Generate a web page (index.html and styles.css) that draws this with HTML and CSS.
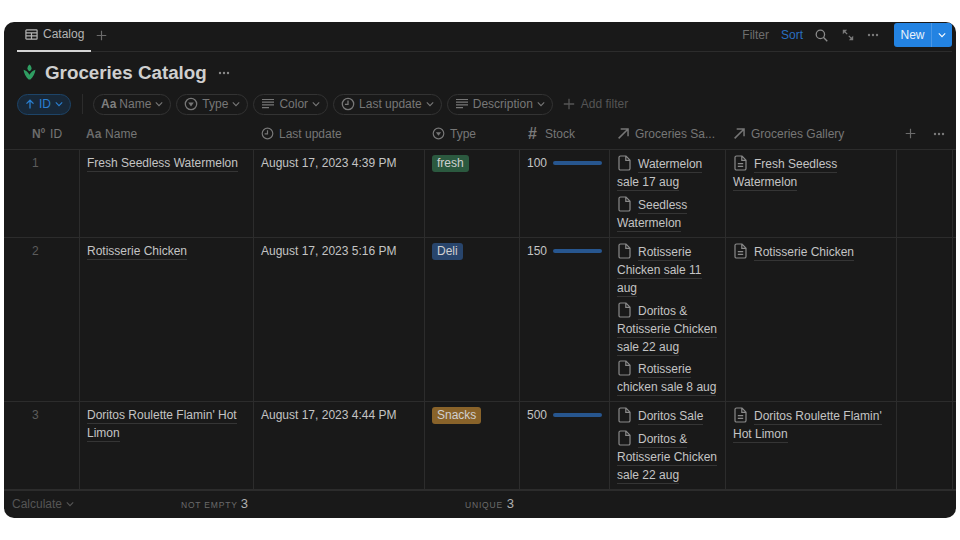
FILE: index.html
```html
<!DOCTYPE html>
<html lang="en">
<head>
    <meta charset="UTF-8">
    <title>Groceries Catalog</title>
    <link rel="stylesheet" href="styles.css">
</head>
<body>
    <svg class="defs" width="0" height="0">
        <symbol id="i-clock" viewBox="0 0 14 14"><circle cx="7" cy="7" r="5.7" fill="none" stroke="currentColor" stroke-width="1.3"/><path d="M7 3.5V7.4H3.9" fill="none" stroke="currentColor" stroke-width="1.3"/></symbol>
        <symbol id="i-select" viewBox="0 0 14 14"><circle cx="7" cy="7" r="5.7" fill="none" stroke="currentColor" stroke-width="1.3"/><path d="M4.2 5.6h5.6L7 9.4z" fill="currentColor"/></symbol>
        <symbol id="i-text" viewBox="0 0 14 14"><path d="M1 2.5h12M1 5.2h12M1 7.9h12M1 10.6h7" fill="none" stroke="currentColor" stroke-width="1.2"/></symbol>
        <symbol id="i-chev" viewBox="0 0 8 8"><path d="M.8 2.4 4 5.6l3.2-3.2" fill="none" stroke="currentColor" stroke-width="1.1"/></symbol>
        <symbol id="i-arrow" viewBox="0 0 12 12"><path d="M1.5 10.500 10 2M3.400 1.800H10.200V8.600" fill="none" stroke="currentColor" stroke-width="1.400"/></symbol>
        <symbol id="i-dots" viewBox="0 0 12 4"><circle cx="2" cy="2" r="1.2" fill="currentColor"/><circle cx="6" cy="2" r="1.2" fill="currentColor"/><circle cx="10" cy="2" r="1.2" fill="currentColor"/></symbol>
        <symbol id="i-plus" viewBox="0 0 12 12"><path d="M6 .8v10.400M.8 6h10.400" fill="none" stroke="currentColor" stroke-width="1.300"/></symbol>
        <symbol id="i-page" viewBox="0 0 13 16"><path d="M1 2.600C1 1.600 1.600 1 2.600 1H8l4 4.200v8.200c0 1-.6 1.600-1.600 1.600H2.600c-1 0-1.600-.6-1.600-1.600zM7.800 1.200v4.200H12" fill="none" stroke="currentColor" stroke-width="1.200"/></symbol>
        <symbol id="i-doc" viewBox="0 0 13 16"><path d="M1 2.600C1 1.600 1.600 1 2.600 1H8l4 4.200v8.200c0 1-.6 1.600-1.600 1.600H2.600c-1 0-1.600-.6-1.600-1.600zM7.800 1.200v4.200H12M3.800 8.600h5.400M3.800 11.400h5.400" fill="none" stroke="currentColor" stroke-width="1.200"/></symbol>
    </svg>

    <div class="app">
        <div class="tabs">
            <div class="tab">
                <svg class="tab-icon" viewBox="0 0 14 12"><path d="M1.600 1h10.800c.4 0 .7.3.7.7v8.600c0 .4-.3.7-.7.7H1.600a.7.7 0 0 1-.7-.7V1.700c0-.4.3-.7.7-.7zM1 4.200h12M1 7.500h12M7 4.200V11" fill="none" stroke="currentColor" stroke-width="1.300"/></svg>
                <span>Catalog</span>
            </div>
            <svg class="tab-plus"><use href="#i-plus"/></svg>
            <div class="tools">
                <span class="tool">Filter</span>
                <span class="tool tool-blue">Sort</span>
                <svg class="tool-search" viewBox="0 0 14 14"><circle cx="5.800" cy="5.800" r="4.500" fill="none" stroke="currentColor" stroke-width="1.400"/><path d="m9 9 4.200 4.200" fill="none" stroke="currentColor" stroke-width="1.500"/></svg>
                <svg class="tool-expand" viewBox="0 0 12 12"><path d="M.8.8h4.400L.8 5.200zM11.200 11.200H6.800l4.400-4.400z" fill="currentColor"/><path d="m2.500 2.500 2.700 2.700M6.800 6.800l2.700 2.700" stroke="currentColor" stroke-width="1.200"/></svg>
                <svg class="tool-dots"><use href="#i-dots"/></svg>
                <div class="new-btn">
                    <span class="new-label">New</span>
                    <span class="new-arrow"><svg class="chev"><use href="#i-chev"/></svg></span>
                </div>
            </div>
        </div>

        <div class="title-row">
            <svg class="logo" viewBox="0 0 14 18"><path d="M7 .8c1.300 1.200 2.200 2.600 2.200 4.100 0 1.500-.9 2.700-2.200 3.300-1.300-.6-2.200-1.800-2.200-3.300C4.800 3.400 5.700 2 7 .8z" fill="#2f9e62"/><path d="M.6 6.500c2.600.6 5 2.600 6.400 5.400 1.400-2.800 3.800-4.800 6.400-5.400-.2 3.400-2.600 8-5.400 10.700H6C3.200 14.500.8 9.900.6 6.500z" fill="#2f9e62"/></svg>
            <h1>Groceries Catalog</h1>
            <svg class="title-dots"><use href="#i-dots"/></svg>
        </div>

        <div class="filters">
            <div class="pill pill-blue">
                <svg class="sort-arrow" viewBox="0 0 10 10"><path d="M5 9.500V1.200M1.500 4.600 5 1.200l3.500 3.400" fill="none" stroke="currentColor" stroke-width="1.300"/></svg>
                <span>ID</span>
                <svg class="chev"><use href="#i-chev"/></svg>
            </div>
            <div class="divider"></div>
            <div class="pill"><b class="aa">Aa</b><span>Name</span><svg class="chev"><use href="#i-chev"/></svg></div>
            <div class="pill"><svg class="pill-icon"><use href="#i-select"/></svg><span>Type</span><svg class="chev"><use href="#i-chev"/></svg></div>
            <div class="pill"><svg class="pill-icon"><use href="#i-text"/></svg><span>Color</span><svg class="chev"><use href="#i-chev"/></svg></div>
            <div class="pill"><svg class="pill-icon"><use href="#i-clock"/></svg><span>Last update</span><svg class="chev"><use href="#i-chev"/></svg></div>
            <div class="pill"><svg class="pill-icon"><use href="#i-text"/></svg><span>Description</span><svg class="chev"><use href="#i-chev"/></svg></div>
            <div class="add-filter"><svg class="add-plus"><use href="#i-plus"/></svg><span>Add filter</span></div>
        </div>

        <div class="row row-head">
            <div class="th th-id"><span class="no">Nº</span><span>ID</span></div>
            <div class="th"><span class="aa-head">Aa</span><span>Name</span></div>
            <div class="th"><svg class="th-icon"><use href="#i-clock"/></svg><span>Last update</span></div>
            <div class="th"><svg class="th-icon"><use href="#i-select"/></svg><span>Type</span></div>
            <div class="th"><span class="hash">#</span><span>Stock</span></div>
            <div class="th"><svg class="th-icon"><use href="#i-arrow"/></svg><span>Groceries Sa...</span></div>
            <div class="th"><svg class="th-icon"><use href="#i-arrow"/></svg><span>Groceries Gallery</span></div>
            <div class="th th-end"><svg class="head-plus"><use href="#i-plus"/></svg><svg class="head-dots"><use href="#i-dots"/></svg></div>
        </div>

        <div class="row row-1">
            <div class="td td-id">1</div>
            <div class="td"><span class="link">Fresh Seedless Watermelon</span></div>
            <div class="td">August 17, 2023 4:39 PM</div>
            <div class="td"><span class="tag tag-green">fresh</span></div>
            <div class="td td-stock"><span>100</span><span class="bar"></span></div>
            <div class="td td-rel">
                <div class="rel"><svg class="page"><use href="#i-page"/></svg><span class="link">Watermelon sale 17 aug</span></div>
                <div class="rel"><svg class="page"><use href="#i-page"/></svg><span class="link">Seedless Watermelon</span></div>
            </div>
            <div class="td td-rel">
                <div class="rel"><svg class="page"><use href="#i-doc"/></svg><span class="link">Fresh Seedless Watermelon</span></div>
            </div>
            <div class="td"></div>
        </div>

        <div class="row row-2">
            <div class="td td-id">2</div>
            <div class="td"><span class="link">Rotisserie Chicken</span></div>
            <div class="td">August 17, 2023 5:16 PM</div>
            <div class="td"><span class="tag tag-blue">Deli</span></div>
            <div class="td td-stock"><span>150</span><span class="bar"></span></div>
            <div class="td td-rel">
                <div class="rel"><svg class="page"><use href="#i-page"/></svg><span class="link">Rotisserie Chicken sale 11 aug</span></div>
                <div class="rel"><svg class="page"><use href="#i-page"/></svg><span class="link">Doritos &amp; Rotisserie Chicken sale 22 aug</span></div>
                <div class="rel"><svg class="page"><use href="#i-page"/></svg><span class="link">Rotisserie chicken sale 8 aug</span></div>
            </div>
            <div class="td td-rel">
                <div class="rel"><svg class="page"><use href="#i-doc"/></svg><span class="link">Rotisserie Chicken</span></div>
            </div>
            <div class="td"></div>
        </div>

        <div class="row row-3">
            <div class="td td-id">3</div>
            <div class="td"><span class="link">Doritos Roulette Flamin' Hot Limon</span></div>
            <div class="td">August 17, 2023 4:44 PM</div>
            <div class="td"><span class="tag tag-brown">Snacks</span></div>
            <div class="td td-stock"><span>500</span><span class="bar"></span></div>
            <div class="td td-rel">
                <div class="rel"><svg class="page"><use href="#i-page"/></svg><span class="link">Doritos Sale</span></div>
                <div class="rel"><svg class="page"><use href="#i-page"/></svg><span class="link">Doritos &amp; Rotisserie Chicken sale 22 aug</span></div>
            </div>
            <div class="td td-rel">
                <div class="rel"><svg class="page"><use href="#i-doc"/></svg><span class="link">Doritos Roulette Flamin' Hot Limon</span></div>
            </div>
            <div class="td"></div>
        </div>

        <div class="footer">
            <div class="calc"><span>Calculate</span><svg class="chev"><use href="#i-chev"/></svg></div>
            <div class="stat stat-name"><span class="stat-label">NOT EMPTY</span><span class="stat-val">3</span></div>
            <div class="stat stat-type"><span class="stat-label">UNIQUE</span><span class="stat-val">3</span></div>
        </div>
    </div>
</body>
</html>
```

FILE: styles.css
```css
* {
    box-sizing: border-box;
}
body {
    margin: 0;
    width: 960px;
    height: 540px;
    background-color: #ffffff;
    padding: 22px 4px;
    font-family: "Liberation Sans", Arial, sans-serif;
    font-size: 12px;
    color: #c4c4c4;
    overflow: hidden;
}
.defs {
    display: block;
    height: 0;
}
.app {
    width: 952px;
    height: 496px;
    background-color: #191919;
    border-radius: 10px;
    overflow: hidden;
}
svg {
    flex: none;
}

/* tabs */
.tabs {
    display: flex;
    align-items: center;
    height: 30px;
    margin: 0 4px 0 13px;
    border-bottom: 1px solid #2c2c2c;
}
.tab {
    display: flex;
    align-items: center;
    gap: 5px;
    width: 74px;
    height: 30px;
    padding: 0 0 3px 8px;
    border-bottom: 2px solid #d4d4d4;
    color: #b4b4b4;
}
.tab-icon {
    width: 13px;
    height: 11px;
}
.tab-plus {
    width: 11px;
    height: 11px;
    margin: 0 0 3px 5px;
    color: #6b6b6b;
}
.tools {
    display: flex;
    align-items: center;
    margin-left: auto;
    height: 30px;
    padding-bottom: 3px;
    color: #6e6e6e;
}
.tool-blue {
    margin-left: 12px;
    color: #2a6fc0;
}
.tool-search {
    width: 13px;
    height: 13px;
    margin-left: 12px;
    color: #8a8a8a;
}
.tool-expand {
    width: 12px;
    height: 12px;
    margin-left: 14px;
    color: #7a7a7a;
}
.tool-dots {
    width: 12px;
    height: 4px;
    margin-left: 13px;
    color: #7a7a7a;
}
.new-btn {
    display: flex;
    align-items: stretch;
    height: 24px;
    margin: 0 0 1px 15px;
    background-color: #2383e2;
    border-radius: 3px;
    color: #ffffff;
}
.new-label {
    width: 37px;
    padding-top: 5px;
    text-align: center;
    color: #e8f2fc;
}
.new-arrow {
    display: flex;
    align-items: center;
    justify-content: center;
    width: 21px;
    border-left: 1px solid #4a97e6;
}

/* title */
.title-row {
    display: flex;
    align-items: center;
    height: 40px;
    padding: 2px 0 0 19px;
}
.logo {
    width: 13px;
    height: 18px;
    margin-top: -3px;
}
h1 {
    margin: 0 0 0 9px;
    font-size: 18.8px;
    font-weight: 700;
    color: #cfcfcf;
}
.title-dots {
    width: 12px;
    height: 4px;
    margin-left: 11px;
    color: #8a8a8a;
}

/* filters */
.filters {
    display: flex;
    align-items: center;
    height: 24px;
    padding-left: 13px;
    gap: 5px;
    color: #777777;
}
.pill {
    display: flex;
    align-items: center;
    gap: 4px;
    height: 21px;
    padding: 0 7px;
    border: 1px solid #333333;
    border-radius: 11px;
}
.pill-blue {
    background-color: #182838;
    border-color: #1d4468;
    color: #2a7fd0;
}
.sort-arrow {
    width: 10px;
    height: 10px;
}
.divider {
    width: 1px;
    height: 20px;
    margin: 0 5px 0 6px;
    background-color: #2c2c2c;
}
.aa {
    margin-right: -1px;
    font-size: 12px;
    color: #7f7f7f;
}
.pill-icon {
    width: 14px;
    height: 14px;
}
.chev {
    width: 8px;
    height: 8px;
}
.add-filter {
    display: flex;
    align-items: center;
    gap: 6px;
    margin: 0 0 1px 5px;
    color: #555555;
}
.add-plus {
    width: 12px;
    height: 12px;
}

/* table */
.row {
    display: grid;
    grid-template-columns: 76px 174px 171px 95px 90px 116px 171px 56px;
    border-bottom: 1px solid #2c2c2c;
}
.row-head {
    height: 34px;
    color: #767676;
}
.row-1 {
    height: 88px;
}
.row-2 {
    height: 164px;
}
.row-3 {
    height: 88px;
}
.th {
    display: flex;
    align-items: center;
    gap: 5px;
    padding: 2px 7px 0;
}
.th-id {
    padding-left: 28px;
}
.th-end {
    justify-content: flex-end;
    gap: 17px;
    padding-right: 8px;
}
.no {
    font-size: 12px;
    font-weight: 700;
    color: #6b6b6b;
}
.aa-head {
    margin: 0 -1.300px 0 -1px;
    font-weight: 700;
    font-size: 12px;
    color: #6b6b6b;
}
.hash {
    width: 12px;
    margin-left: 1px;
    font-size: 16px;
    font-weight: 700;
    color: #7a7a7a;
}
.th-icon {
    width: 13px;
    height: 13px;
}
.head-plus {
    width: 11px;
    height: 11px;
    color: #6b6b6b;
}
.head-dots {
    width: 12px;
    height: 4px;
    color: #7a7a7a;
}
.td {
    padding: 4px 7px 0;
    line-height: 18px;
    border-right: 1px solid #2c2c2c;
}
.td-id {
    padding-left: 28px;
    color: #5c5c5c;
}
.link {
    padding-bottom: 1px;
    border-bottom: 1px solid #353535;
}
.tag {
    display: inline-block;
    height: 17px;
    margin-top: 1px;
    padding: 0 5px;
    line-height: 17px;
    border-radius: 3px;
    color: #d0d0d0;
}
.tag-green {
    background-color: #2b593f;
}
.tag-blue {
    background-color: #28456c;
}
.tag-brown {
    background-color: #89632a;
}
.td-stock {
    display: flex;
    align-items: flex-start;
    gap: 6px;
}
.bar {
    width: 50px;
    height: 4px;
    margin-top: 7px;
    background-color: #27568f;
    border-radius: 2px;
}
.rel {
    margin-bottom: 4.500px;
    padding-top: 1px;
}
.rel + .rel {
    padding-top: 0;
}
.page {
    width: 13px;
    height: 16px;
    margin: 0 7px 0 1px;
    color: #8a8a8a;
    vertical-align: -3px;
}

/* footer */
.footer {
    position: relative;
    height: 28px;
    border-top: 1px solid #2c2c2c;
}
.calc {
    display: flex;
    align-items: center;
    gap: 4px;
    height: 26px;
    padding-left: 8px;
    color: #555555;
}
.stat {
    position: absolute;
    top: 5px;
    display: flex;
    align-items: baseline;
    gap: 3px;
}
.stat-name {
    left: 177px;
}
.stat-type {
    left: 461px;
    gap: 4px;
}
.stat-label {
    font-size: 8.500px;
    letter-spacing: 0.8px;
    color: #6b6b6b;
}
.stat-val {
    font-size: 13px;
    color: #b0b0b0;
}
```
